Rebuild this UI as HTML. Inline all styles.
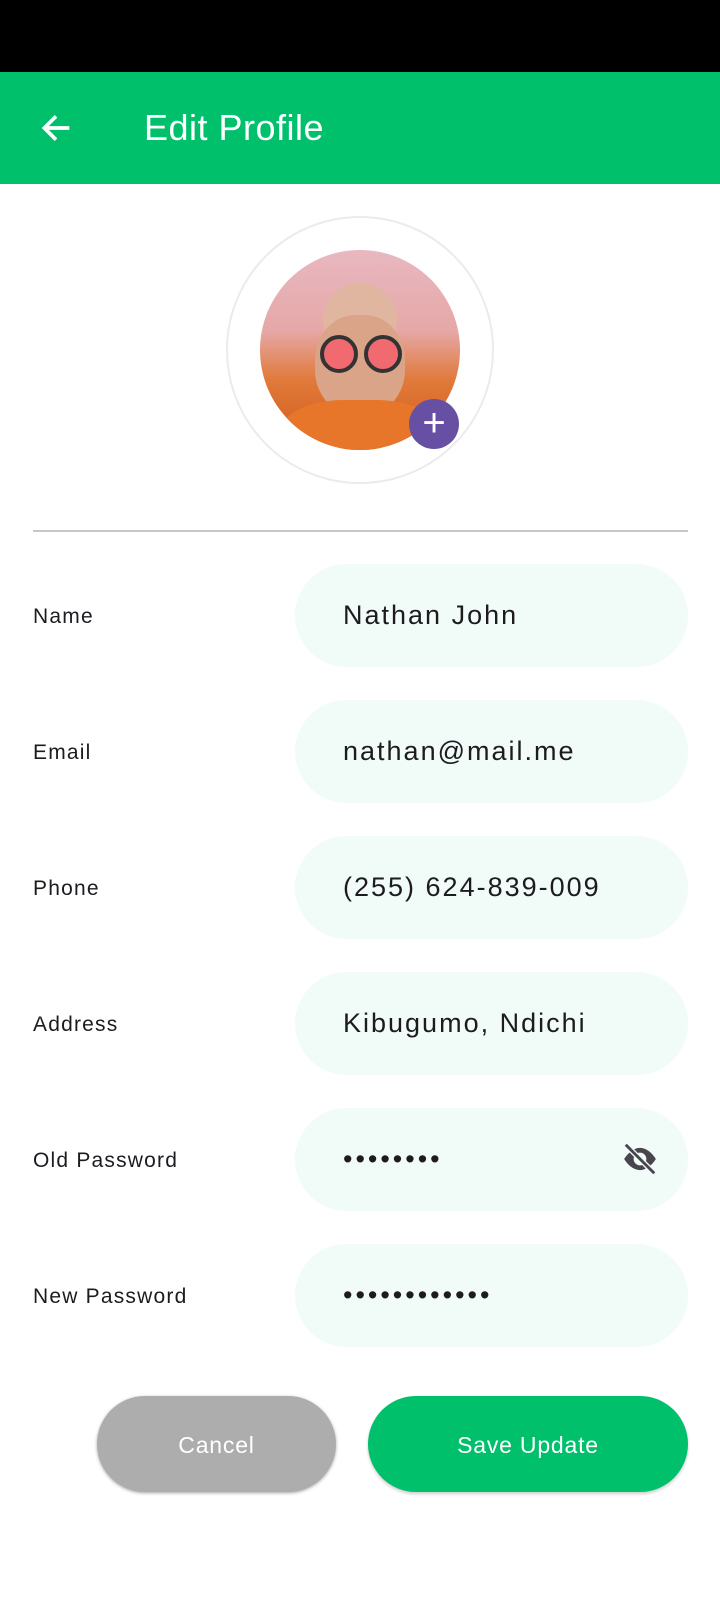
<!DOCTYPE html>
<html><head><meta charset="utf-8"><style>
*{margin:0;padding:0;box-sizing:border-box}
body{width:720px;height:1600px;background:#fff;font-family:"Liberation Sans",sans-serif;position:relative;overflow:hidden}
.sb{position:absolute;left:0;top:0;width:720px;height:72px;background:#000}
.hd{position:absolute;left:0;top:72px;width:720px;height:112px;background:#00c06c}
.hd .t{position:absolute;left:144px;top:35px;font-size:36px;color:#fff;letter-spacing:.5px}
.oc{position:absolute;left:226px;top:216px;width:268px;height:268px;border-radius:50%;border:2px solid #ebebeb}
.ph{position:absolute;left:260px;top:250px;width:200px;height:200px;border-radius:50%;overflow:hidden;
background:radial-gradient(circle at 50% 35%,#e0b6a0 0 22%,transparent 23%),linear-gradient(180deg,#e8b8c0 0%,#e6a8a8 40%,#e07a3a 65%,#d25a18 100%)}
.plus{position:absolute;left:409px;top:399px;width:50px;height:50px;border-radius:50%;background:#6750a4;color:#fff;font-size:40px;line-height:48px;text-align:center}
.dv{position:absolute;left:33px;top:530px;width:655px;height:2px;background:#c8c6cc}
.lb{position:absolute;left:33px;font-size:21px;color:#1d1b20;letter-spacing:1.2px}
.f{position:absolute;left:295px;width:393px;height:103px;border-radius:52px;background:#f1fbf7}
.f span{position:absolute;left:48px;top:36px;font-size:27px;color:#1d1b20;letter-spacing:2px}
.btn{position:absolute;top:1396px;height:96px;border-radius:48px;color:#fff;font-size:23px;text-align:center;line-height:98px;letter-spacing:.8px}
</style></head><body>
<div class="sb"></div>
<div class="hd">
<svg style="position:absolute;left:36px;top:36px" width="40" height="40" viewBox="0 0 24 24"><path d="M20 12H5M12 5l-7 7 7 7" stroke="#fff" stroke-width="2.2" fill="none"/></svg>
<div class="t">Edit Profile</div></div>
<div class="oc"></div>
<div class="ph">
<div style="position:absolute;left:55px;top:65px;width:90px;height:100px;border-radius:45%;background:#d9a488"></div>
<div style="position:absolute;left:60px;top:85px;width:38px;height:38px;border-radius:50%;background:#f06a70;border:4px solid #333"></div>
<div style="position:absolute;left:104px;top:85px;width:38px;height:38px;border-radius:50%;background:#f06a70;border:4px solid #333"></div>
<div style="position:absolute;left:20px;top:150px;width:160px;height:80px;border-radius:40%;background:#e8762a"></div>
</div>
<div class="plus">+</div>
<div class="dv"></div>
<div class="lb" style="top:605px">Name</div><div class="f" style="top:564px"><span>Nathan John</span></div>
<div class="lb" style="top:741px">Email</div><div class="f" style="top:700px"><span>nathan@mail.me</span></div>
<div class="lb" style="top:877px">Phone</div><div class="f" style="top:836px"><span>(255) 624-839-009</span></div>
<div class="lb" style="top:1013px">Address</div><div class="f" style="top:972px"><span>Kibugumo, Ndichi</span></div>
<div class="lb" style="top:1149px">Old Password</div><div class="f" style="top:1108px"><span style="letter-spacing:3px">••••••••</span>
<svg style="position:absolute;left:324px;top:32px" width="42" height="38" viewBox="0 0 24 24"><path d="M12 5C6 5 2 12 2 12s4 7 10 7 10-7 10-7-4-7-10-7zm0 11a4 4 0 110-8 4 4 0 010 8z" fill="#49454f"/><path d="M3 3l18 18" stroke="#f1fbf7" stroke-width="3.5"/><path d="M3 3l18 18" stroke="#49454f" stroke-width="1.8"/></svg></div>
<div class="lb" style="top:1285px">New Password</div><div class="f" style="top:1244px"><span style="letter-spacing:3px">••••••••••••</span></div>
<div class="btn" style="left:97px;width:239px;background:#adadad;box-shadow:0 1px 3px rgba(0,0,0,.35)">Cancel</div>
<div class="btn" style="left:368px;width:320px;background:#00c06c;box-shadow:0 2px 3px rgba(0,0,0,.2)">Save Update</div>
</body></html>
